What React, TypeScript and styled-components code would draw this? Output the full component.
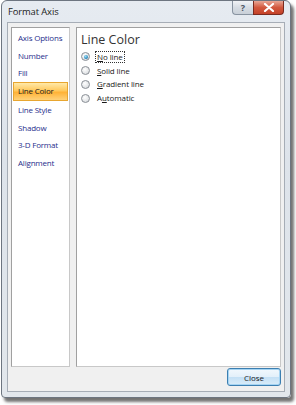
import { createGlobalStyle } from "styled-components";
import styled from "styled-components";

const GlobalStyle = createGlobalStyle`
  html, body {
    margin: 0;
    padding: 0;
    background: #ffffff;
  }
  body {
    font-family: "Open Sans", "Noto Sans", sans-serif;
  }
`;

const navItems = ["Axis Options", "Number", "Fill", "Line Color", "Line Style", "Shadow", "3-D Format", "Alignment"];
const options = [
  { label: "No line", key: "N", checked: true },
  { label: "Solid line", key: "S", checked: false },
  { label: "Gradient line", key: "G", checked: false },
  { label: "Automatic", key: "u", checked: false },
];

const Underlined: React.FC<{ text: string; hot: string }> = ({ text, hot }) => {
  const i = text.indexOf(hot);
  return (
    <>
      {text.slice(0, i)}
      <u>{hot}</u>
      {text.slice(i + 1)}
    </>
  );
};

export default function App() {
  return (
    <>
      <GlobalStyle />
      <Stage>
        <Window>
          <TitleBar>
            <Title>Format Axis</Title>
            <Caption>
              <HelpButton>?</HelpButton>
              <CloseX>
                <svg width="12" height="9" viewBox="0 0 12 9">
                  <path d="M2 1 L10 8 M10 1 L2 8" stroke="#ffffff" strokeWidth="2.2" strokeLinecap="round" />
                </svg>
              </CloseX>
            </Caption>
          </TitleBar>
          <Client>
            <Panels>
              <Nav>
                {navItems.map((item) => (
                  <NavItem key={item} $active={item === "Line Color"}>
                    {item}
                  </NavItem>
                ))}
              </Nav>
              <Content>
                <Heading>Line Color</Heading>
                <RadioList>
                  {options.map((o) => (
                    <RadioRow key={o.label}>
                      <Radio $checked={o.checked} />
                      <RadioLabel $focused={o.checked}>
                        <Underlined text={o.label} hot={o.key} />
                      </RadioLabel>
                    </RadioRow>
                  ))}
                </RadioList>
              </Content>
            </Panels>
            <Footer>
              <Button>Close</Button>
            </Footer>
          </Client>
        </Window>
      </Stage>
    </>
  );
}

const Stage = styled.div`
  width: 296px;
  height: 405px;
  padding: 0 5px 7px 1px;
  box-sizing: border-box;
  overflow: hidden;
`;

const Window = styled.div`
  width: 290px;
  height: 398px;
  box-sizing: border-box;
  border: 1px solid #6d7580;
  border-radius: 6px 6px 4px 4px;
  background: linear-gradient(180deg, #e6ebf1 0%, #dde3ea 40%, #e2e7ec 100%);
  box-shadow: 3px 4px 3px rgba(0, 0, 0, 0.55);
  display: flex;
  flex-direction: column;
  padding: 0 5px 5px 5px;
`;

const TitleBar = styled.div`
  height: 21px;
  display: flex;
  align-items: flex-start;
  justify-content: space-between;
`;

const Title = styled.div`
  font-size: 9.4px;
  color: #1a1a1a;
  padding: 4px 0 0 1px;
  letter-spacing: -0.1px;
`;

const Caption = styled.div`
  display: flex;
  margin-right: 1px;
`;

const HelpButton = styled.div`
  width: 21px;
  height: 14px;
  box-sizing: border-box;
  border: 1px solid #8893a0;
  border-top: none;
  border-right: none;
  border-radius: 0 0 0 4px;
  background: linear-gradient(180deg, #f1f3f6 0%, #d6dce3 50%, #c9d0d8 100%);
  color: #4a5360;
  font-size: 9px;
  font-weight: bold;
  text-align: center;
  line-height: 13px;
`;

const CloseX = styled.div`
  width: 31px;
  height: 14px;
  box-sizing: border-box;
  border: 1px solid #7a2a1e;
  border-top: none;
  border-radius: 0 0 4px 0;
  background: linear-gradient(180deg, #e8a796 0%, #d2583e 50%, #c44127 100%);
  display: flex;
  align-items: center;
  justify-content: center;
`;

const Client = styled.div`
  flex: 1;
  background: #f0f0f0;
  border: 1px solid #a6adb6;
  display: flex;
  flex-direction: column;
  padding: 4px 3px 0 3px;
`;

const Panels = styled.div`
  flex: 1;
  display: flex;
  gap: 6px;
`;

const Nav = styled.div`
  width: 59px;
  box-sizing: border-box;
  background: #ffffff;
  border: 1px solid #a0a0a0;
  border-right-color: #c8c8c8;
  border-bottom-color: #c8c8c8;
  padding-top: 1px;
`;

const NavItem = styled.div<{ $active: boolean }>`
  height: 17.5px;
  line-height: 17.5px;
  padding-left: 5px;
  margin: 0 1px;
  font-size: 8px;
  color: #1f2e8c;
  white-space: nowrap;
  letter-spacing: -0.2px;
  ${(p) =>
    p.$active &&
    `
    color: #1a1a1a;
    background: linear-gradient(180deg, #ffe9a8 0%, #ffc85c 45%, #ffb236 55%, #ffd27a 100%);
    border: 1px solid #e8a630;
    line-height: 15.5px;
    padding-left: 4px;
  `}
`;

const Content = styled.div`
  flex: 1;
  box-sizing: border-box;
  background: #ffffff;
  border: 1px solid #a0a0a0;
  border-right-color: #c8c8c8;
  border-bottom-color: #c8c8c8;
  padding: 4px 4px;
`;

const Heading = styled.div`
  font-size: 12.5px;
  color: #333333;
  line-height: 16px;
  margin-bottom: 2px;
`;

const RadioList = styled.div`
  display: flex;
  flex-direction: column;
`;

const RadioRow = styled.div`
  display: flex;
  align-items: center;
  height: 13.8px;
  gap: 5px;
`;

const Radio = styled.div<{ $checked: boolean }>`
  width: 9px;
  height: 9px;
  border-radius: 50%;
  box-sizing: border-box;
  border: 1px solid #8a8f96;
  background: radial-gradient(circle at 40% 35%, #ffffff 0%, #e4e6e8 60%, #cfd3d6 100%);
  position: relative;
  ${(p) =>
    p.$checked &&
    `
    &::after {
      content: "";
      position: absolute;
      left: 1.5px;
      top: 1.5px;
      width: 4px;
      height: 4px;
      border-radius: 50%;
      background: radial-gradient(circle at 40% 35%, #9ee0f5 0%, #1f7fb8 70%, #0e4f7e 100%);
    }
  `}
`;

const RadioLabel = styled.span<{ $focused: boolean }>`
  font-size: 8px;
  color: #1a1a1a;
  line-height: 10px;
  padding: 0 1px;
  letter-spacing: -0.1px;
  border: 1px dotted ${(p) => (p.$focused ? "#333333" : "transparent")};
  u {
    text-decoration-thickness: 0.5px;
  }
`;

const Footer = styled.div`
  height: 23px;
  display: flex;
  justify-content: flex-end;
  align-items: flex-start;
  padding-top: 1px;
  padding-right: 0px;
`;

const Button = styled.button`
  width: 54px;
  height: 18px;
  box-sizing: border-box;
  border: 1px solid #3c7fb1;
  border-radius: 3px;
  background: linear-gradient(180deg, #f2f8fd 0%, #e3f0fa 48%, #c4e0f5 52%, #d9ecf9 100%);
  box-shadow: inset 0 0 0 1px #a5d4f3;
  font-family: "Open Sans", "Noto Sans", sans-serif;
  font-size: 8px;
  color: #1a1a1a;
  padding: 0;
`;
